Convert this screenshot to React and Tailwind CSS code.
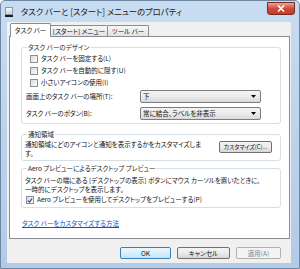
function Check({ checked }) {
  return (
    <div className="w-[8px] h-[8px] shrink-0 border border-[#8e8f8f] bg-gradient-to-br from-[#dcdcdc] to-[#fbfbfb] flex items-center justify-center">
      {checked && (
        <svg width="7" height="7" viewBox="0 0 7 7">
          <path d="M1 3.6 L2.8 5.4 L6 1.2" fill="none" stroke="#2a4fa0" strokeWidth="1.4" />
        </svg>
      )}
    </div>
  );
}

function Select({ value }) {
  return (
    <div className="w-[121px] h-[13px] flex items-center border border-[#7c7c7c] rounded-[2px] bg-gradient-to-b from-[#f4f4f4] via-[#ebebeb] to-[#d9d9d9] pl-[2px] pr-[4px]">
      <span className="flex-1 leading-[11px]">{value}</span>
      <svg width="5" height="3" viewBox="0 0 5 3">
        <path d="M0 0 H5 L2.5 3 Z" fill="#000" />
      </svg>
    </div>
  );
}

function Button({ children, className = "" }) {
  return (
    <div className={`h-[12px] flex items-center justify-center rounded-[2px] border bg-gradient-to-b leading-none whitespace-nowrap ${className}`}>
      {children}
    </div>
  );
}

export default function App() {
  return (
    <div className="w-[300px] h-[269px] flex flex-col overflow-hidden rounded-t-[5px] border border-[#6d87a4] bg-gradient-to-b from-[#c8dcf1] via-[#bcd3ec] to-[#b2cbe6] text-[6.5px] text-[#111] font-['Noto_Sans_CJK_JP',sans-serif] [font-feature-settings:'palt']">
      {/* Title bar */}
      <div className="h-[21px] flex items-center shrink-0">
        <div className="ml-[4px] w-[8px] h-[10px] flex flex-col">
          <div className="flex-1 border border-[#8a97a6] bg-gradient-to-b from-[#f6f8fb] to-[#c9d2dc]" />
          <div className="h-[2px] bg-[#1c1c1c]" />
        </div>
        <span className="ml-[8px] text-[8.3px] text-[#1a1a1a] leading-none">タスク バーと [スタート] メニューのプロパティ</span>
        <div className="ml-auto mr-[4px] -mt-[7px] w-[28px] h-[13px] rounded-b-[3px] border border-[#7a2a24] bg-gradient-to-b from-[#e8a493] via-[#cf4a3a] to-[#c63b2c] flex items-center justify-center">
          <svg width="8" height="7" viewBox="0 0 8 7">
            <path d="M1 0.5 L7 6.5 M7 0.5 L1 6.5" stroke="#fff" strokeWidth="1.6" />
          </svg>
        </div>
      </div>

      {/* Client */}
      <div className="flex-1 ml-[6px] mr-[8px] mb-[5px] bg-[#f0f0f0] flex flex-col">
        {/* Tabs */}
        <div className="h-[14px] flex items-end pl-[3px] shrink-0">
          <div className="relative z-10 -mb-[1px] w-[41px] h-[14px] bg-white border border-b-0 border-[#898c95] rounded-t-[2px] flex items-center justify-center leading-none">
            タスク バー
          </div>
          <div className="w-[57px] h-[11px] border border-b-0 border-l-0 border-[#898c95] rounded-tr-[2px] bg-gradient-to-b from-[#f8f8f8] to-[#e2e2e2] flex items-center justify-center leading-none">
            [スタート] メニュー
          </div>
          <div className="w-[41px] h-[11px] border border-b-0 border-l-0 border-[#898c95] rounded-tr-[2px] bg-gradient-to-b from-[#f8f8f8] to-[#e2e2e2] flex items-center justify-center leading-none">
            ツール バー
          </div>
        </div>

        {/* Panel */}
        <div className="ml-[2px] mr-[1px] h-[203px] shrink-0 bg-white border border-[#898c95] pl-[11px] pr-[8px] pt-[6px] flex flex-col">
          <fieldset className="border border-[#d5dfe5] rounded-[3px] px-[4px] pb-[3px]">
            <legend className="ml-[1px] px-[1px] leading-[9px] text-[#1e1e1e]">タスク バーのデザイン</legend>
            <div className="mt-[1px] flex flex-col pl-[4px]">
              <div className="h-[12px] flex items-center gap-[3px]"><Check /><span>タスク バーを固定する(L)</span></div>
              <div className="h-[12px] flex items-center gap-[3px]"><Check /><span>タスク バーを自動的に隠す(U)</span></div>
              <div className="h-[12px] flex items-center gap-[3px]"><Check /><span>小さいアイコンの使用(I)</span></div>
            </div>
            <div className="mt-[1px] flex flex-col gap-[4px]">
              <div className="flex items-center">
                <span className="w-[114px]">画面上のタスク バーの場所(T):</span>
                <Select value="下" />
              </div>
              <div className="flex items-center">
                <span className="w-[114px]">タスク バーのボタン(B):</span>
                <Select value="常に結合、ラベルを非表示" />
              </div>
            </div>
          </fieldset>

          <fieldset className="mt-[6px] border border-[#d5dfe5] rounded-[3px] pl-[3px] pb-[3px]">
            <legend className="ml-[2px] px-[1px] leading-[9px] text-[#1e1e1e]">通知領域</legend>
            <div className="flex items-start">
              <p className="w-[188px] leading-[8.5px] pt-[1px] whitespace-nowrap">
                通知領域にどのアイコンと通知を表示するかをカスタマイズしま<br />す。
              </p>
              <Button className="ml-auto mr-[8px] mt-[2px] w-[53px] text-[5.8px] border-[#707070] from-[#f3f3f3] via-[#ebebeb] to-[#d6d6d6]">
                カスタマイズ(C)...
              </Button>
            </div>
          </fieldset>

          <fieldset className="mt-[3px] border border-[#d5dfe5] rounded-[3px] pl-[3px] pb-[1px]">
            <legend className="ml-[2px] px-[1px] leading-[9px] text-[#1e1e1e]">Aero プレビューによるデスクトップ プレビュー</legend>
            <p className="pt-[3px] leading-[8.5px] whitespace-nowrap">
              タスク バーの端にある [デスクトップの表示] ボタンにマウス カーソルを置いたときに、<br />
              一時的にデスクトップを表示します。
            </p>
            <div className="mt-[1px] h-[12px] flex items-center gap-[3px] pl-[1px]">
              <Check checked />
              <span>Aero プレビューを使用してデスクトップをプレビューする(P)</span>
            </div>
          </fieldset>

          <div className="mt-[10px] ml-[1px] leading-[10px]">
            <span className="text-[#0b55c4] underline">タスク バーをカスタマイズする方法</span>
          </div>
        </div>

        {/* Footer buttons */}
        <div className="mt-[8px] flex justify-end gap-[6px] pr-[10px]">
          <Button className="w-[51px] border-[#3c7fb1] from-[#eaf6fd] via-[#d9f0fc] to-[#bee6fd]">OK</Button>
          <Button className="w-[53px] border-[#707070] from-[#f3f3f3] via-[#ebebeb] to-[#d6d6d6]">キャンセル</Button>
          <Button className="w-[45px] border-[#adb2b5] from-[#f4f4f4] to-[#f4f4f4] text-[#838383]">適用(A)</Button>
        </div>
      </div>
    </div>
  );
}
